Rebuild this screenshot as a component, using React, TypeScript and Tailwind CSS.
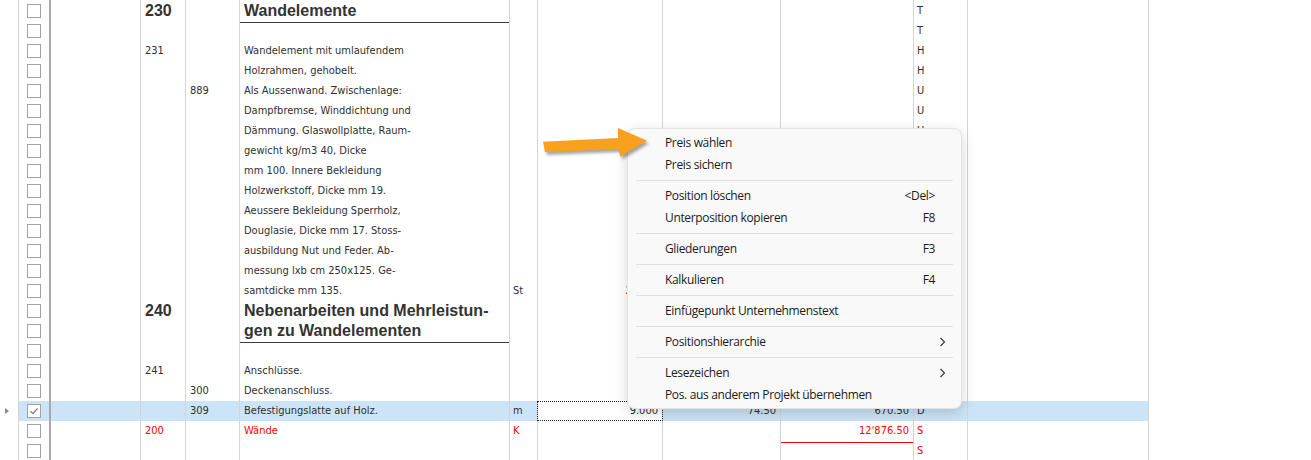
import React from 'react';

type GridRow = {
  a?: string;
  b?: string;
  text?: string;
  heading?: boolean;
  rule?: boolean;
  unit?: string;
  qty?: string;
  qtyRed?: boolean;
  price?: string;
  total?: string;
  letter?: string;
  red?: boolean;
  selected?: boolean;
  sumLine?: boolean;
};

// Rows 7..19 of the type column sit under the open context menu
const rows: GridRow[] = [
  { a: '230', text: 'Wandelemente', heading: true, rule: true, letter: 'T' },
  { letter: 'T' },
  { a: '231', text: 'Wandelement mit umlaufendem', letter: 'H' },
  { text: 'Holzrahmen, gehobelt.', letter: 'H' },
  { b: '889', text: 'Als Aussenwand. Zwischenlage:', letter: 'U' },
  { text: 'Dampfbremse, Winddichtung und', letter: 'U' },
  { text: 'Dämmung. Glaswollplatte, Raum-', letter: 'U' },
  { text: 'gewicht kg/m3 40, Dicke' },
  { text: 'mm 100. Innere Bekleidung' },
  { text: 'Holzwerkstoff, Dicke mm 19.' },
  { text: 'Aeussere Bekleidung Sperrholz,' },
  { text: 'Douglasie, Dicke mm 17. Stoss-' },
  { text: 'ausbildung Nut und Feder. Ab-' },
  { text: 'messung lxb cm 250x125. Ge-' },
  { text: 'samtdicke mm 135.', unit: 'St', qty: '24.000', qtyRed: true },
  { a: '240', text: 'Nebenarbeiten und Mehrleistun-', heading: true },
  { text: 'gen zu Wandelementen', heading: true, rule: true },
  {},
  { a: '241', text: 'Anschlüsse.' },
  { b: '300', text: 'Deckenanschluss.' },
  { b: '309', text: 'Befestigungslatte auf Holz.', unit: 'm', qty: '9.000', price: '74.50', total: '670.50', letter: 'D', selected: true },
  { a: '200', text: 'Wände', unit: 'K', total: '12\'876.50', letter: 'S', red: true, sumLine: true },
  { letter: 'S', red: true },
];

const menuItems: ({ label: string; key?: string; sub?: boolean } | 'sep')[] = [
  { label: 'Preis wählen' },
  { label: 'Preis sichern' },
  'sep',
  { label: 'Position löschen', key: '<Del>' },
  { label: 'Unterposition kopieren', key: 'F8' },
  'sep',
  { label: 'Gliederungen', key: 'F3' },
  'sep',
  { label: 'Kalkulieren', key: 'F4' },
  'sep',
  { label: 'Einfügepunkt Unternehmenstext' },
  'sep',
  { label: 'Positionshierarchie', sub: true },
  'sep',
  { label: 'Lesezeichen', sub: true },
  { label: 'Pos. aus anderem Projekt übernehmen' },
];

const line = 'border-r border-[#d4d4d4]';

const CheckBox = ({ checked }: { checked?: boolean }) => (
  <div className="w-[14px] h-[14px] border border-[#a2a2a2] bg-white flex items-center justify-center">
    {checked && (
      <svg width="10" height="10" viewBox="0 0 10 10">
        <path d="M1.5 5.2 L4 7.6 L8.6 2.4" fill="none" stroke="#7a7a7a" strokeWidth="1.3" />
      </svg>
    )}
  </div>
);

const Row = ({ r }: { r: GridRow }) => {
  const sel = r.selected ? 'bg-[#cce4f7]' : '';
  const color = r.red ? 'text-[#ff0000]' : 'text-[#2f2f2f]';
  return (
    <div className={`flex h-[20px] leading-[20px] ${color}`}>
      <div className={`w-[19px] shrink-0 ${line} flex items-center pl-[5px]`}>
        {r.selected && (
          <div className="w-0 h-0 border-y-[3.5px] border-y-transparent border-l-[4px] border-l-[#8a8a8a]" />
        )}
      </div>
      <div className={`w-[32px] shrink-0 border-r-2 border-[#a8a8a8] flex items-center justify-center ${sel}`}>
        <CheckBox checked={r.selected} />
      </div>
      <div className={`w-[90px] shrink-0 ${line} ${sel}`} />
      <div className={`w-[45px] shrink-0 ${line} pl-[4px] ${sel}`}>
        {r.a && (r.heading ? (
          <span className="font-['Liberation_Sans',sans-serif] font-bold text-[16px] text-[#333333]">{r.a}</span>
        ) : r.a)}
      </div>
      <div className={`w-[54px] shrink-0 ${line} pl-[4px] ${sel}`}>{r.b}</div>
      <div className={`w-[270px] shrink-0 ${line} pl-[4px] relative whitespace-nowrap ${sel}`}>
        {r.heading ? (
          <span className="font-['Liberation_Sans',sans-serif] font-bold text-[16px] text-[#333333]">{r.text}</span>
        ) : r.text}
        {r.rule && <span className="absolute left-0 right-0 top-[21px] h-px bg-[#3c3c3c]" />}
      </div>
      <div className={`w-[28px] shrink-0 ${line} pl-[3px] ${sel}`}>{r.unit}</div>
      <div className={`w-[125px] shrink-0 ${line} text-right relative ${r.qtyRed ? 'text-[#ff0000] pr-[2px]' : 'pr-[4px]'} ${r.selected ? 'bg-white' : ''}`}>
        {r.qty}
        {r.selected && <span className="absolute -left-px -right-px inset-y-0 border border-dotted border-[#222222]" />}
      </div>
      <div className={`w-[118px] shrink-0 ${line} pr-[4px] text-right ${sel}`}>{r.price}</div>
      <div className={`w-[133px] shrink-0 ${line} pr-[4px] text-right relative ${sel}`}>
        {r.total}
        {r.sumLine && <span className="absolute left-0 right-0 top-[21px] h-px bg-[#ff0000]" />}
      </div>
      <div className={`w-[54px] shrink-0 ${line} pl-[3px] ${sel}`}>{r.letter}</div>
      <div className={`w-[181px] shrink-0 ${line} ${sel}`} />
      <div className="flex-1" />
    </div>
  );
};

const ContextMenu = () => (
  <div className="absolute left-[627px] top-[128px] w-[335px] pt-[3px] pb-[2px] bg-[#f9f9f9] border border-[#e3e3e3] rounded-[8px] shadow-[0_4px_14px_rgba(0,0,0,0.16)] font-['Open_Sans',sans-serif] text-[12px] tracking-[-0.35px] text-[#1b1b1b]">
    {menuItems.map((it, i) =>
      it === 'sep' ? (
        <div key={i} className="h-[9px] flex items-center px-[8px]">
          <div className="h-px w-full bg-[#e0e0e0]" />
        </div>
      ) : (
        <div key={i} className="h-[22px] flex items-center pl-[37px]">
          <span className="flex-1">{it.label}</span>
          {it.key && <span>{it.key}</span>}
          <span className="w-[26px] pl-[4px] flex items-center">
            {it.sub && (
              <svg width="7" height="10" viewBox="0 0 7 10">
                <path d="M1.5 1 L5.5 5 L1.5 9" fill="none" stroke="#333" strokeWidth="1.1" />
              </svg>
            )}
          </span>
        </div>
      )
    )}
  </div>
);

const Pointer = () => (
  <svg className="absolute left-[536px] top-[122px]" width="120" height="44" viewBox="0 0 120 44">
    <defs>
      <filter id="soft" x="-20%" y="-40%" width="140%" height="180%">
        <feGaussianBlur stdDeviation="1.6" />
      </filter>
    </defs>
    <polygon
      points="9,22.5 84,19 84,9 113,21.5 86,37.5 85,30 11,33"
      fill="rgba(0,0,0,0.35)"
      filter="url(#soft)"
    />
    <polygon points="7,19.7 82,16 82,6 111,18.7 84,34.7 83,27 9,30" fill="#f8a11c" />
  </svg>
);

export default function App() {
  return (
    <div className="relative w-[1311px] h-[460px] overflow-hidden bg-white font-['DejaVu_Sans_Condensed','Liberation_Sans',sans-serif] text-[11px]">
      <div className="flex h-px">
        <div className={`w-[19px] ${line}`} />
        <div className="w-[32px] border-r-2 border-[#a8a8a8]" />
        <div className={`w-[90px] ${line}`} />
        <div className={`w-[45px] ${line}`} />
        <div className={`w-[54px] ${line}`} />
        <div className={`w-[270px] ${line}`} />
        <div className={`w-[28px] ${line}`} />
        <div className={`w-[125px] ${line}`} />
        <div className={`w-[118px] ${line}`} />
        <div className={`w-[133px] ${line}`} />
        <div className={`w-[54px] ${line}`} />
        <div className={`w-[181px] ${line}`} />
      </div>
      {rows.map((r, i) => (
        <Row key={i} r={r} />
      ))}
      <ContextMenu />
      <Pointer />
    </div>
  );
}
